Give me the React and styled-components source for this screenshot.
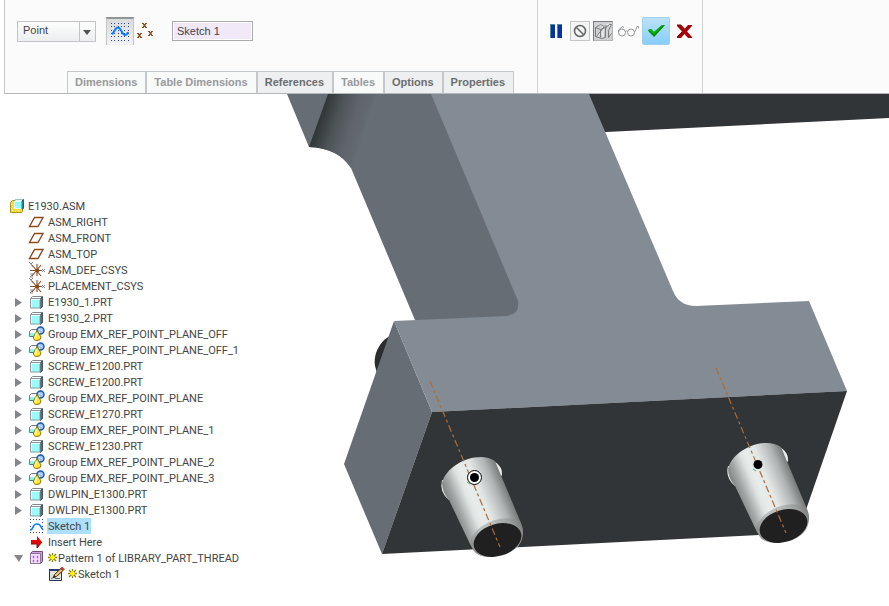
import React, { useState } from "react";
import styled, { createGlobalStyle, css } from "styled-components";

const GlobalStyle = createGlobalStyle`
  * { box-sizing: border-box; }
  body { margin: 0; background: #fff; color: #444; font-family: "Liberation Sans", Arial, sans-serif; font-size: 11px; }
  button, input, select { font: inherit; color: inherit; }
  svg { display: block; }
`;

const Page = styled.div`
  min-height: 100vh;
  display: flex;
  flex-direction: column;
  overflow: hidden;
`;

const Dashboard = styled.header`
  display: flex;
  margin-left: 4px;
  border-left: 1px solid #c5c7c9;
  border-bottom: 1px solid #b5b8ba;
  background: #fbfbfb;
`;

const Settings = styled.section`
  flex: 0 1 533px;
  border-right: 1px solid #d0d2d3;
`;

const ControlRow = styled.div`
  display: flex;
  align-items: center;
  height: 71px;
  padding: 0 12px 9px;
`;

const TypeSelect = styled.div`
  position: relative;
  width: 79px;
  height: 21px;
  margin-right: 10px;
  border: 1px solid #c1c4c6;
  background: linear-gradient(#fdfdfd, #eceeef);

  select {
    width: 100%;
    height: 100%;
    padding: 0 22px 2px 5px;
    border: 0;
    background: transparent;
    appearance: none;
  }
  svg {
    position: absolute;
    right: 0;
    top: 0;
    pointer-events: none;
  }
`;

const ToolButton = styled.button`
  display: grid;
  place-items: center;
  flex: none;
  width: ${(p) => p.$size}px;
  height: ${(p) => p.$size}px;
  padding: 0;
  border: 0;
  background: transparent;
  ${(p) => p.$look === "pressed" && css`
    border: 1px solid #c3c5c7;
    border-top: 2px solid #929496;
    border-bottom: 0;
    background: linear-gradient(#d9dbdd, #f1f2f3);
  `}
  ${(p) => p.$look === "framed" && css`
    border: 1px solid #c3c5c7;
    background: #f3f4f4;
  `}
  ${(p) => p.$look === "sunken" && css`
    border: 1px solid #77797b;
    border-right-color: #b5b7b9;
    border-bottom-color: #b5b7b9;
    background: #cfd1d3;
  `}
  ${(p) => p.$look === "accept" && css`
    border: 1px solid #a2cfee;
    border-radius: 2px;
    background: linear-gradient(#bce2fa, #86cdfa);
  `}
`;

const NameInput = styled.input`
  width: 81px;
  height: 20px;
  margin-left: 16px;
  padding: 0 4px;
  border: 1px solid #a9abad;
  outline: 1px solid #fff;
  outline-offset: -2px;
  background: #f1e9f8;
`;

const Tabs = styled.nav`
  display: flex;
  height: 22px;
  padding-left: 62px;
`;

const Tab = styled.button`
  padding: 0 8px 1px 7px;
  border: 1px solid #c5c8ca;
  border-bottom: 0;
  background: #edeff0;
  color: #6b6d6f;
  font-weight: bold;
  white-space: nowrap;
  &:disabled {
    background: #f8f9f9;
    color: #989a9c;
  }
`;

const Actions = styled.section`
  flex: 0 0 165px;
  padding: 17px 0 0 7px;
  border-right: 1px solid #d0d2d3;
`;

const ActionRow = styled.div`
  display: flex;
  align-items: center;
  gap: ${(p) => p.$gap}px;
`;

const Workspace = styled.main`
  display: flex;
  align-items: flex-start;
`;

const Tree = styled.ul`
  flex: 0 0 280px;
  margin: 0;
  padding: 104px 0 0;
  list-style: none;
  font-family: Roboto, "Liberation Sans", sans-serif;
`;

const TreeRow = styled.li`
  display: flex;
  align-items: center;
  gap: 1px;
  height: 16px;
  padding-left: ${(p) => [8, 12, 32][p.$depth]}px;
`;

const Toggle = styled.button`
  display: grid;
  place-items: center start;
  width: 15px;
  height: 16px;
  padding: 0 0 0 2px;
  border: 0;
  background: none;
`;

const Spacer = styled.span`
  width: 15px;
`;

const TreeIcon = styled.span`
  flex: 0 0 18px;
  height: 16px;
`;

const Label = styled.span`
  display: flex;
  align-items: center;
  height: 16px;
  padding: 0 1px;
  white-space: nowrap;
  background: ${(p) => (p.$selected ? "#ade0fd" : "transparent")};
`;

const Viewport = styled.div`
  flex: 1;
  min-width: 0;
  svg { width: 100%; height: auto; }
`;

const dots = (cols, rows) =>
  rows.flatMap((y) => cols.map((x) => <rect key={`${x}-${y}`} x={x} y={y} width="1" height="1" fill="#2c3f8c" />));

const SketchIcon = () => (
  <svg width="18" height="18" shapeRendering="crispEdges">
    {dots([0, 3, 7, 10, 13, 17], [0, 3, 7, 10, 13, 17])}
    <path d="M1 11C3 10 4 4.500 7 4.500S11 12 14 12Q16 12 17 9" fill="none" stroke="#0b7fff" strokeWidth="2" shapeRendering="auto" />
  </svg>
);

const Cross = ({ x, y }) => (
  <path transform={`translate(${x} ${y})`} d="M0 0h2v1h1V0h2v1H4v1H3.500v1H4v1h1v1H3V4H2v1H0V4h1V3h.5V2H1V1H0z" fill="#94501e" />
);

const PointsIcon = () => (
  <svg width="18" height="18"><Cross x={6} y={1} /><Cross x={12} y={9} /><Cross x={1} y={11} /></svg>
);

const PauseIcon = () => (
  <svg width="12" height="14" shapeRendering="crispEdges">
    <path d="M0 0h5v14H0zM7 0h5v14H7z" fill="#53869f" />
    <path d="M1 1h4v13H1zM8 1h4v13H8z" fill="#0632a2" />
  </svg>
);

const NoneIcon = () => (
  <svg width="14" height="14" fill="none" stroke="#626466" strokeWidth="1.5"><circle cx="7" cy="7" r="5.500" /><path d="M3.500 3.500l7 7" /></svg>
);

const GeometryIcon = () => (
  <svg width="18" height="18" fill="none" stroke="#f3f3f0" strokeWidth="1">
    <path d="M2 6l4-4 4 3 4-3 3 2M2 15l5-4 5 5M9 4v11" />
    <path d="M1.500 5.500l5-3 5 3v10l-4 1-6-2zM1.500 5.500l5 2 5-2M6.500 7.500v8M11.500 5.500l4-3h2l-3 6v7l3-4M2 15l8-10M12 3l-1 12" stroke="#7b7c7d" />
  </svg>
);

const GlassesIcon = () => (
  <svg width="22" height="12" fill="none" stroke="#969899" strokeWidth="1">
    <circle cx="5" cy="7.500" r="3.500" /><circle cx="14" cy="7.500" r="3.500" />
    <path d="M8.500 6.500q1-1 2 0M1.500 7V5l4-3.500 1.500 1M17.500 7l1.500-2.500 1-3h1.500v2" />
  </svg>
);

const CheckIcon = () => (
  <svg width="18" height="14">
    <path d="M1 6l3-1 3 3 8-7h3L7 13z" fill="#087d12" />
    <path d="M1 6l3-1 3 3 8-7h2L7 11z" fill="#07b907" />
    <path d="M2 7l5 4.500L16 2" stroke="#008f08" strokeWidth="1.500" fill="none" />
  </svg>
);

const CancelIcon = () => (
  <svg width="17" height="15">
    <path d="M1 1h4l3.500 4L12 1h4v1l-5 5.500 5 5.500v1h-4l-3.500-4L5 14H1v-1l5-5.500L1 2z" fill="#a50404" />
    <path d="M1 1h4l3.500 4M6 8l-5 5" fill="none" stroke="#7e0b0b" />
  </svg>
);

const iconShapes = {
  assembly: (
    <>
      <path d="M2.500 4.500l2-2h4v8h6v3l-1 1h-11z" fill="#f5dc3d" stroke="#b3961c" />
      <path d="M3 6h1v1H3zM4 8h1v1H4zM3 10h1v1H3zM4 12h1v1H4zM7 13h1v1H7zM10 12h1v1h-1z" fill="#fff7b7" />
      <path d="M6.500 3.500l1-2h8l-2 2z" fill="#dffefe" stroke="#67999c" strokeWidth=".6" />
      <path d="M6.500 3.500h7v7h-7z" fill="#94fafa" stroke="#e9ffff" />
      <path d="M14 3l1.500-1.500v9L14 11z" fill="#159aaa" stroke="#176c78" />
    </>
  ),
  plane: <path d="M6.500 3.500h8.500l-5 9H1.500z" fill="none" stroke="#8f4a1e" strokeWidth="1.400" />,
  csys: (
    <>
      <path d="M9 2v12M2 8.500h12M4 3l9 11M13 3L4 14" stroke="#8f4a1e" strokeWidth="1.100" />
      <path d="M7 7h4v3H7z" fill="#8f4a1e" />
      <path d="M1 0l2 2 2-2M3 2l2 3M14 7l3 3M17 7l-3 3M2 12h3l-3 3h3" fill="none" stroke="#898989" />
    </>
  ),
  part: (
    <>
      <path d="M2.500 4.500l2-2h10l-2 2z" fill="#f7ffff" stroke="#8a8a8a" />
      <path d="M12.500 4.500l2-2v10l-2 2z" fill="#17818e" stroke="#4a5b5d" />
      <path d="M2.500 4.500h9.500v9.500H2.500z" fill="#9bfbfb" stroke="#8a9c9d" />
      <path d="M3.500 13V5.500H12" fill="none" stroke="#eaffff" />
    </>
  ),
  group: (
    <>
      <path d="M1.500 5.500l2-2h7v7h-9z" fill="#fff" stroke="#7a7a7a" />
      <path d="M2 7h7v3H2z" fill="#8ff0ee" />
      <path d="M2 10.500h6" stroke="#2b8790" />
      <circle cx="12.500" cy="4.500" r="3.500" fill="#9dc0f0" stroke="#1f57ae" strokeWidth="1.400" />
      <path d="M11 3h1v1h-1zM13 4h1v1h-1zM11 6h1v1h-1z" fill="#fff" />
      <path d="M9 4.500L5.500 11q-.5 3.500 3.500 3.500t4-3.500z" fill="#ffe63b" stroke="#84720f" />
      <path d="M8.500 7L7 12" stroke="#fffabd" strokeWidth="1.500" />
    </>
  ),
  sketch: (
    <>
      <g shapeRendering="crispEdges">
        {dots([2, 5, 8, 11, 14], [1, 14])}
        {dots([2, 14], [4, 8, 11])}
      </g>
      <path d="M2 12q2 0 3-3t4-3 4 3l2 3" fill="none" stroke="#0b7fff" strokeWidth="1.600" />
    </>
  ),
  insert: (
    <>
      <path d="M3 6h6V2l5 6-5 6v-4H3z" fill="#e40909" />
      <path d="M3 10h6v4l5-6" fill="none" stroke="#8e0606" />
    </>
  ),
  pattern: (
    <>
      <path d="M2.500 3.500l2-2h10v10l-2 2h-10z" fill="#cf9ee6" stroke="#6e5079" />
      <path d="M2.500 3.500h10v10h-10z" fill="#f5dcff" stroke="#8d759a" />
      <path d="M5 6h1v2H5zM9 6h1v2H9zM5 10h1v2H5zM9 10h1v2H9z" fill="#902bb3" stroke="#b978d2" strokeWidth=".5" />
    </>
  ),
  edit: (
    <>
      <path d="M1.500 3.500h12v11h-12z" fill="#dfe3dd" stroke="#253565" />
      <path d="M1 3h12v2H1z" fill="#263c79" />
      <path d="M3 12.500l3-1M7 12.500h5" stroke="#666" />
      <path d="M5.500 11.500l1-3 6.500-6 2 2-6.500 6z" fill="#f0c46a" stroke="#4b3014" />
      <path d="M12.500 2.500L14 1l2.500 2L15 4.500z" fill="#d74324" stroke="#7a2413" strokeWidth=".6" />
      <path d="M5 12l1-3 2 2z" fill="#222" />
    </>
  ),
};

const Star = () => (
  <svg width="10" height="10" aria-label="modified">
    <path d="M4.500 0v9M0 4.500h9M1 1l7 7M8 1L1 8" stroke="#8a8112" strokeWidth="1.300" />
    <path d="M4.500 2v5M2 4.500h5M3 3l3 3M6 3L3 6" stroke="#fff200" strokeWidth="1.500" />
  </svg>
);

const tabs = [
  ["Dimensions", true],
  ["Table Dimensions", true],
  ["References", false],
  ["Tables", true],
  ["Options", false],
  ["Properties", false],
];

const nodes = [
  { text: "E1930.ASM", icon: "assembly", depth: 0 },
  { text: "ASM_RIGHT", icon: "plane" },
  { text: "ASM_FRONT", icon: "plane" },
  { text: "ASM_TOP", icon: "plane" },
  { text: "ASM_DEF_CSYS", icon: "csys" },
  { text: "PLACEMENT_CSYS", icon: "csys" },
  { text: "E1930_1.PRT", icon: "part", arrow: "closed" },
  { text: "E1930_2.PRT", icon: "part", arrow: "closed" },
  { text: "Group EMX_REF_POINT_PLANE_OFF", icon: "group", arrow: "closed" },
  { text: "Group EMX_REF_POINT_PLANE_OFF_1", icon: "group", arrow: "closed" },
  { text: "SCREW_E1200.PRT", icon: "part", arrow: "closed" },
  { text: "SCREW_E1200.PRT", icon: "part", arrow: "closed" },
  { text: "Group EMX_REF_POINT_PLANE", icon: "group", arrow: "closed" },
  { text: "SCREW_E1270.PRT", icon: "part", arrow: "closed" },
  { text: "Group EMX_REF_POINT_PLANE_1", icon: "group", arrow: "closed" },
  { text: "SCREW_E1230.PRT", icon: "part", arrow: "closed" },
  { text: "Group EMX_REF_POINT_PLANE_2", icon: "group", arrow: "closed" },
  { text: "Group EMX_REF_POINT_PLANE_3", icon: "group", arrow: "closed" },
  { text: "DWLPIN_E1300.PRT", icon: "part", arrow: "closed" },
  { text: "DWLPIN_E1300.PRT", icon: "part", arrow: "closed" },
  { text: "Sketch 1", icon: "sketch", selected: true },
  { text: "Insert Here", icon: "insert" },
  { text: "Pattern 1 of LIBRARY_PART_THREAD", icon: "pattern", arrow: "open", star: true },
  { text: "Sketch 1", icon: "edit", depth: 2, star: true },
];

const TreeNode = ({ text, icon, depth = 1, arrow, star, selected }) => (
  <TreeRow $depth={depth}>
    {arrow && (
      <Toggle aria-label={`${arrow === "open" ? "Collapse" : "Expand"} ${text}`}>
        <svg width="9" height="9">
          <path d={arrow === "open" ? "M0 1h9l-4 7z" : "M1 0v9l7-4.500z"} fill="#858789" />
        </svg>
      </Toggle>
    )}
    {!arrow && depth > 0 && <Spacer />}
    <TreeIcon>
      <svg width="18" height="16">{iconShapes[icon]}</svg>
    </TreeIcon>
    <Label $selected={selected}>
      {star && <Star />}
      {text}
    </Label>
  </TreeRow>
);

const Pin = ({ shift }) => (
  <g transform={shift}>
    <path d="M442 480Q439 492 449 500L457 480zM494 461Q503 467 502 475L500 478 490 466z" fill="#eceded" />
    <path d="M442 483C447 463 479 450 495 461L521 523Q526 534 519 545C511 557 482 562 474 551L470 544 449 500Q442 492 442 483z" fill="url(#steel)" />
    <path d="M470 543C472 527 500 512 520 521Q526 532 518 544C511 556 482 562 474 551z" fill="#858b8a" fillOpacity=".45" />
    <ellipse cx="497.500" cy="540" rx="24.500" ry="16" transform="rotate(-17 497.500 540)" fill="#202020" />
  </g>
);

const Model = () => (
  <svg viewBox="280 94 609 512" role="img" aria-label="3D model of the assembly">
    <defs>
      <linearGradient id="steel" gradientUnits="userSpaceOnUse" x1="446" y1="500" x2="504" y2="476">
        <stop offset="0" stopColor="#7d7f7f" />
        <stop offset=".14" stopColor="#a3a6a6" />
        <stop offset=".32" stopColor="#e0e5e4" />
        <stop offset=".4" stopColor="#e8edec" />
        <stop offset=".56" stopColor="#e3e8e7" />
        <stop offset=".8" stopColor="#b0b3b3" />
        <stop offset="1" stopColor="#6b6d6d" />
      </linearGradient>
      <linearGradient id="bore" gradientUnits="userSpaceOnUse" x1="318" y1="120" x2="366" y2="136">
        <stop offset="0" stopColor="#2f3435" />
        <stop offset=".35" stopColor="#4d5457" />
        <stop offset=".65" stopColor="#5f636b" />
        <stop offset="1" stopColor="#666d74" />
      </linearGradient>
    </defs>
    <path d="M580 94H889V118L606 132 596 132z" fill="#313537" />
    <path d="M287 94H440L520 300V320H415L351 168Q338 148 309 147z" fill="#666d74" />
    <path d="M328 94H376L351 168Q338 148 309 147z" fill="url(#bore)" />
    <path d="M390 336C380 341 373 354 375 366L377 373 386 355z" fill="#2b2e2e" />
    <path d="M394 321L344 464 382 554 432 412z" fill="#666d74" />
    <path d="M431 94H589L673 291Q679 306 696 306L809 301 847 391 432 412 394 321 507 316Q520 314 518 301z" fill="#838b94" />
    <path d="M432 412L847 391 798 533 382 554z" fill="#313537" />
    <Pin />
    <Pin shift="translate(286 -14)" />
    <g stroke="#ad6c36" strokeWidth="1.200" strokeDasharray="7 3 3 3">
      <path d="M430 381L500 547M716 368L786 533" />
    </g>
    <path d="M467 482l3 2M753 469l3 2" stroke="#35c05c" />
    <circle cx="474.500" cy="477.500" r="7" fill="#fff" stroke="#000" />
    <circle cx="474.500" cy="477.500" r="4.500" />
    <circle cx="758" cy="464.500" r="4.500" />
  </svg>
);

export default function App() {
  const [name, setName] = useState("Sketch 1");
  return (
    <Page>
      <GlobalStyle />
      <Dashboard>
        <Settings>
          <ControlRow>
            <TypeSelect>
              <select aria-label="Pattern type" defaultValue="Point">
                <option>Point</option>
              </select>
              <svg width="16" height="19">
                <path d="M.5 0v19" stroke="#c1c4c6" />
                <path d="M4 8h8l-4 5z" fill="#515355" />
              </svg>
            </TypeSelect>
            <ToolButton $size={28} $look="pressed" aria-label="Use sketch"><SketchIcon /></ToolButton>
            <ToolButton $size={22} aria-label="Use datum points"><PointsIcon /></ToolButton>
            <NameInput aria-label="Sketch reference" value={name} onChange={(e) => setName(e.target.value)} />
          </ControlRow>
          <Tabs>
            {tabs.map(([label, disabled]) => <Tab key={label} disabled={disabled}>{label}</Tab>)}
          </Tabs>
        </Settings>
        <Actions>
          <ActionRow $gap={3}>
            <ToolButton $size={22} aria-label="Pause"><PauseIcon /></ToolButton>
            <ToolButton $size={20} $look="framed" aria-label="No preview"><NoneIcon /></ToolButton>
            <ToolButton $size={20} $look="sunken" aria-label="Preview geometry"><GeometryIcon /></ToolButton>
            <ActionRow $gap={2}>
              <ToolButton $size={24} aria-label="Verify"><GlassesIcon /></ToolButton>
              <ToolButton $size={28} $look="accept" aria-label="Accept"><CheckIcon /></ToolButton>
              <ToolButton $size={24} aria-label="Cancel"><CancelIcon /></ToolButton>
            </ActionRow>
          </ActionRow>
        </Actions>
      </Dashboard>
      <Workspace>
        <Tree aria-label="Model tree">
          {nodes.map((node, i) => <TreeNode key={i} {...node} />)}
        </Tree>
        <Viewport><Model /></Viewport>
      </Workspace>
    </Page>
  );
}
